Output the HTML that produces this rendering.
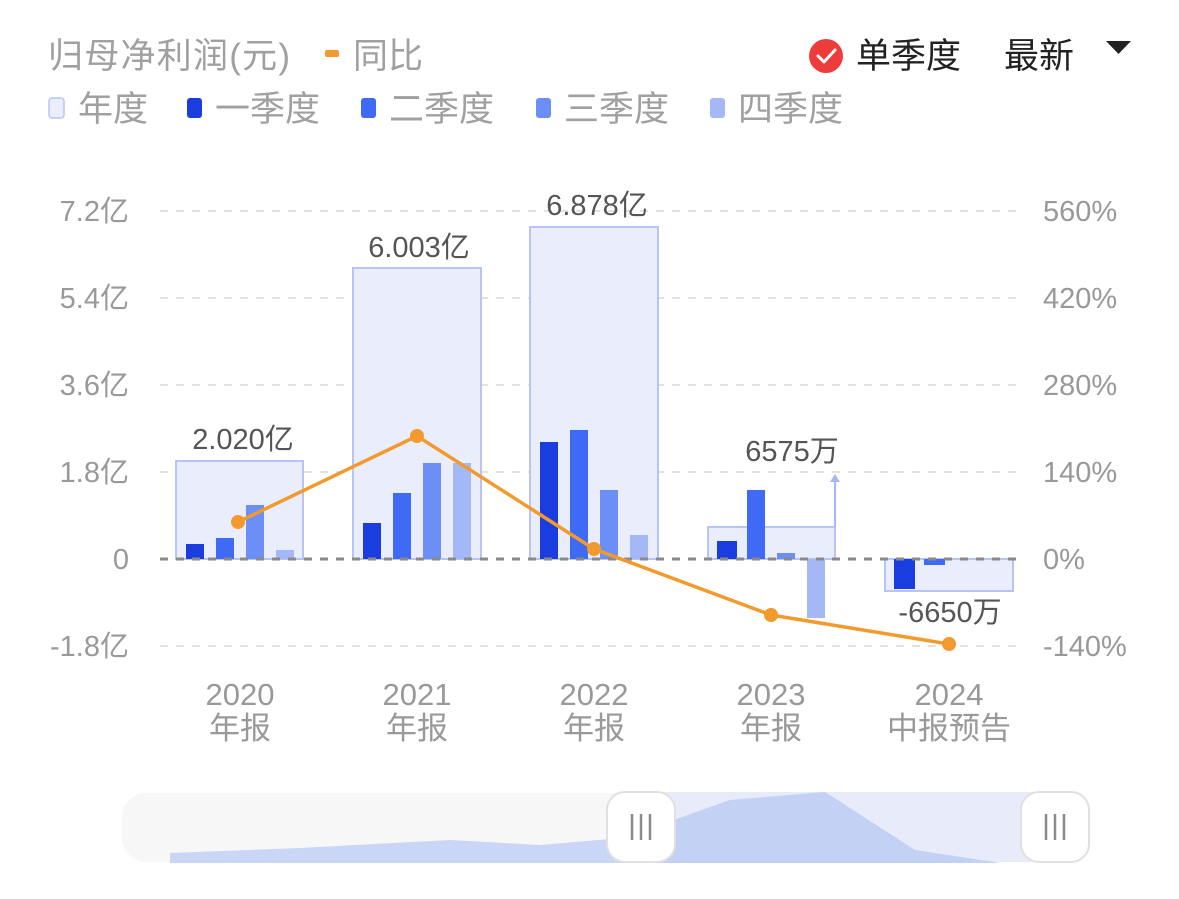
<!DOCTYPE html>
<html><head><meta charset="utf-8"><style>
html,body{margin:0;padding:0;background:#fff;}
body{width:1179px;height:899px;overflow:hidden;}
svg{display:block;font-family:"Liberation Sans","Noto Sans CJK SC",sans-serif;}
</style></head><body>
<svg width="1179" height="899" viewBox="0 0 1179 899">
<!-- header -->
<text x="48" y="68" font-size="35" fill="#a0a0a0" textLength="242">归母净利润(元)</text>
<rect x="325" y="50" width="14" height="7" rx="2" fill="#f29a2e"/>
<text x="353" y="68" font-size="35" fill="#a0a0a0">同比</text>
<circle cx="826" cy="56" r="17" fill="#ee3b3b"/>
<path d="M818 56 L824 62 L835 50" stroke="#fff" stroke-width="3" fill="none" stroke-linecap="round" stroke-linejoin="round"/>
<text x="856" y="68" font-size="35" fill="#222">单季度</text>
<text x="1004" y="68" font-size="35" fill="#222">最新</text>
<path d="M1106 41 L1131 41 L1118.5 54 Z" fill="#222"/>
<!-- legend -->
<rect x="49" y="98" width="15" height="20" rx="3" fill="#eaedfc" stroke="#b8c4f3" stroke-width="1.5"/>
<text x="78" y="121" font-size="35" fill="#a0a0a0">年度</text>
<rect x="187" y="98" width="15" height="20" rx="3" fill="#1a3de0"/>
<text x="215" y="121" font-size="35" fill="#a0a0a0">一季度</text>
<rect x="361" y="98" width="15" height="20" rx="3" fill="#3e6af5"/>
<text x="389" y="121" font-size="35" fill="#a0a0a0">二季度</text>
<rect x="536" y="98" width="15" height="20" rx="3" fill="#6c8ff7"/>
<text x="564" y="121" font-size="35" fill="#a0a0a0">三季度</text>
<rect x="710" y="98" width="15" height="20" rx="3" fill="#a4b8f8"/>
<text x="738" y="121" font-size="35" fill="#a0a0a0">四季度</text>
<!-- grid -->
<g stroke="#e2e2e2" stroke-width="2" stroke-dasharray="8 8">
<line x1="160" y1="211" x2="1022" y2="211"/>
<line x1="160" y1="298" x2="1022" y2="298"/>
<line x1="160" y1="385" x2="1022" y2="385"/>
<line x1="160" y1="472" x2="1022" y2="472"/>
<line x1="160" y1="646" x2="1022" y2="646"/>
</g>
<g font-size="29" fill="#999" text-anchor="end">
<text x="129" y="221">7.2亿</text>
<text x="129" y="308">5.4亿</text>
<text x="129" y="395">3.6亿</text>
<text x="129" y="482">1.8亿</text>
<text x="129" y="569">0</text>
<text x="129" y="656">-1.8亿</text>
</g>
<g font-size="29" fill="#999">
<text x="1043" y="221">560%</text>
<text x="1043" y="308">420%</text>
<text x="1043" y="395">280%</text>
<text x="1043" y="482">140%</text>
<text x="1043" y="569">0%</text>
<text x="1043" y="656">-140%</text>
</g>
<!-- year boxes -->
<g fill="#eaedfc" stroke="#b8c4f3" stroke-width="2">
<rect x="176" y="461" width="127" height="98"/>
<rect x="353" y="268" width="128" height="291"/>
<rect x="530" y="227" width="128" height="332"/>
<rect x="708" y="527" width="127" height="32"/>
<rect x="885" y="559" width="128" height="32"/>
</g>
<line x1="835" y1="527" x2="835" y2="478" stroke="#a4b8f8" stroke-width="2"/>
<path d="M830 482 L835 474 L840 482 Z" fill="#a4b8f8"/>
<!-- quarter bars -->
<g fill="#1a3de0">
<rect x="186" y="544" width="18" height="15"/>
<rect x="363" y="523" width="18" height="36"/>
<rect x="540" y="442" width="18" height="117"/>
<rect x="717" y="541" width="20" height="18"/>
<rect x="894" y="559" width="21" height="30"/>
</g>
<g fill="#3e6af5">
<rect x="216" y="538" width="18" height="21"/>
<rect x="393" y="493" width="18" height="66"/>
<rect x="570" y="430" width="18" height="129"/>
<rect x="747" y="490" width="18" height="69"/>
<rect x="924" y="559" width="21" height="6"/>
</g>
<g fill="#6c8ff7">
<rect x="246" y="505" width="18" height="54"/>
<rect x="423" y="463" width="18" height="96"/>
<rect x="600" y="490" width="18" height="69"/>
<rect x="777" y="553" width="18" height="6"/>
</g>
<g fill="#a4b8f8">
<rect x="276" y="550" width="18" height="9"/>
<rect x="453" y="463" width="18" height="96"/>
<rect x="630" y="535" width="18" height="24"/>
<rect x="807" y="559" width="18" height="59"/>
</g>
<line x1="160" y1="559" x2="1022" y2="559" stroke="#8a8a8a" stroke-width="3" stroke-dasharray="8 8"/>
<!-- line -->
<polyline points="238,522 417,436 594,549 771,615 949,644" fill="none" stroke="#f29a2e" stroke-width="3.5"/>
<g fill="#f29a2e">
<circle cx="238" cy="522" r="7"/><circle cx="417" cy="436" r="7"/><circle cx="594" cy="549" r="7"/><circle cx="771" cy="615" r="7"/><circle cx="949" cy="644" r="7"/>
</g>
<!-- value labels -->
<g font-size="29" fill="#555" text-anchor="middle">
<text x="243" y="449">2.020亿</text>
<text x="419" y="257">6.003亿</text>
<text x="597" y="215">6.878亿</text>
<text x="792" y="461">6575万</text>
<text x="950" y="622">-6650万</text>
</g>
<!-- x labels -->
<g font-size="31" fill="#999" text-anchor="middle">
<text x="240" y="705">2020</text><text x="240" y="739">年报</text>
<text x="417" y="705">2021</text><text x="417" y="739">年报</text>
<text x="594" y="705">2022</text><text x="594" y="739">年报</text>
<text x="771" y="705">2023</text><text x="771" y="739">年报</text>
<text x="949" y="705">2024</text><text x="949" y="739">中报预告</text>
</g>
<!-- slider -->
<rect x="122" y="793" width="968" height="69" rx="24" fill="#f7f7f8"/>
<rect x="640" y="792" width="415" height="70" fill="#e8ecfa"/>
<path d="M170 853 L300 848 L450 840 L540 845 L610 839 L640 832 L730 800 L825 792 L915 850 L1000 863 L170 863 Z" fill="#c9d6f5"/>
<path d="M640 832 L730 800 L825 792 L915 850 L1000 863 L640 863 Z" fill="#c3d1f4"/>
<rect x="607" y="792" width="68" height="70" rx="18" fill="#fff" stroke="#e0e0e0" stroke-width="2"/>
<g stroke="#8a8a8a" stroke-width="2.5"><line x1="632" y1="814" x2="632" y2="840"/><line x1="641" y1="814" x2="641" y2="840"/><line x1="650" y1="814" x2="650" y2="840"/></g>
<rect x="1021" y="792" width="68" height="70" rx="18" fill="#fff" stroke="#e0e0e0" stroke-width="2"/>
<g stroke="#8a8a8a" stroke-width="2.5"><line x1="1046" y1="814" x2="1046" y2="840"/><line x1="1055" y1="814" x2="1055" y2="840"/><line x1="1064" y1="814" x2="1064" y2="840"/></g>
</svg>
</body></html>
